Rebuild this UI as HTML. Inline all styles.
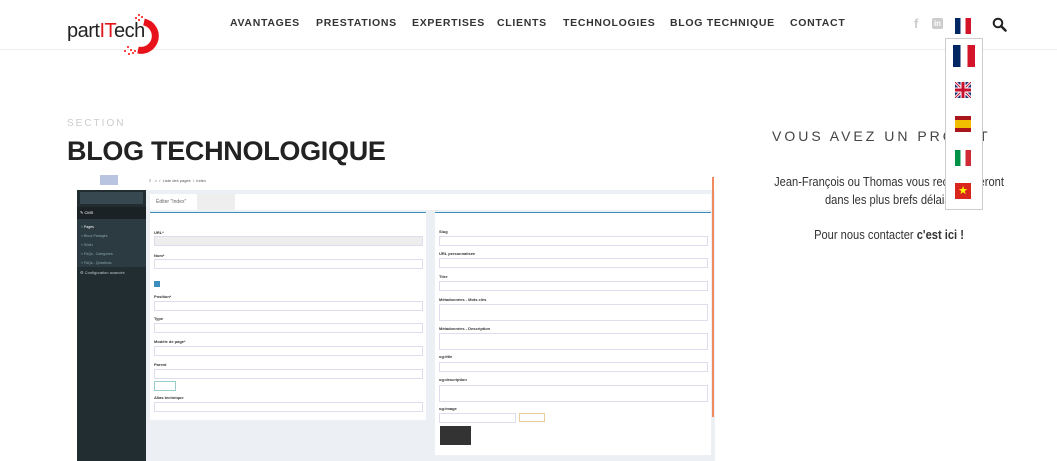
<!DOCTYPE html>
<html><head><meta charset="utf-8"><style>
*{margin:0;padding:0;box-sizing:border-box}
body{width:1057px;height:461px;overflow:hidden;background:#fff;font-family:"Liberation Sans",sans-serif;position:relative;color:#333}
.a{position:absolute}
.nav{top:17px;font-size:10.5px;font-weight:bold;letter-spacing:0.7px;color:#333;white-space:nowrap}
.lbl{position:absolute;font-size:4px;font-weight:bold;color:#333}
.inp{position:absolute;background:#fff;border:1px solid #dde;height:10px;font-size:4px;color:#888;padding:2px 4px}
</style></head><body>
<div class="a" style="left:0;top:49px;width:1057px;height:1px;background:#eee"></div>
<!-- logo -->
<svg class="a" style="left:116px;top:13px" width="46" height="44" viewBox="0 0 46 44"><path d="M28 9 A14 14 0 0 1 22 37" fill="none" stroke="#e8131a" stroke-width="7"/><g fill="#f44">
<rect x="22" y="1" width="2" height="2"/><rect x="25" y="3" width="2" height="2"/><rect x="19" y="4" width="2" height="2"/><rect x="22" y="6" width="2" height="2"/><rect x="14" y="36" width="2" height="2"/><rect x="11" y="33" width="2" height="2"/><rect x="16" y="39" width="2" height="2"/><rect x="8" y="37" width="2" height="2"/><rect x="12" y="40" width="2" height="2"/><rect x="18" y="37" width="2" height="2"/></g></svg>
<div class="a" style="left:67px;top:20px;font-size:20px;color:#222;letter-spacing:-0.5px">part<span style="color:#e0161b">IT</span>ech</div>
<div class="a nav" style="left:230px">AVANTAGES</div>
<div class="a nav" style="left:316px">PRESTATIONS</div>
<div class="a nav" style="left:412px">EXPERTISES</div>
<div class="a nav" style="left:497px">CLIENTS</div>
<div class="a nav" style="left:563px">TECHNOLOGIES</div>
<div class="a nav" style="left:670px">BLOG TECHNIQUE</div>
<div class="a nav" style="left:790px">CONTACT</div>
<div class="a" style="left:914px;top:16px;font-size:13px;color:#ccc;font-weight:bold">f</div>
<div class="a" style="left:932px;top:18px;width:11px;height:11px;background:#ccc;border-radius:2px;color:#fff;font-size:8px;font-weight:bold;text-align:center;line-height:11px">in</div>
<div class="a" style="left:955px;top:18px;width:16px;height:16px;background:linear-gradient(90deg,#002664 33%,#fff 33%,#fff 66%,#d4142b 66%)"></div>
<svg class="a" style="left:992px;top:17px" width="15" height="15" viewBox="0 0 15 15"><circle cx="6" cy="6" r="4.3" fill="none" stroke="#222" stroke-width="2"/><path d="M9 9 L13.5 13.5" stroke="#222" stroke-width="2.5" stroke-linecap="round"/></svg>
<!-- section -->
<div class="a" style="left:67px;top:118px;font-size:10px;letter-spacing:2px;color:#ccc">SECTION</div>
<div class="a" style="left:67px;top:136px;font-size:27px;font-weight:bold;color:#222;letter-spacing:-0.3px">BLOG TECHNOLOGIQUE</div>
<!-- right -->
<div class="a" style="left:772px;top:128px;font-size:14px;letter-spacing:3px;color:#444;white-space:nowrap">VOUS AVEZ UN PROJET</div>
<div class="a" style="left:740px;top:174px;width:298px;text-align:center;font-size:12.5px;line-height:17.5px;color:#333;white-space:nowrap;transform:scaleX(0.89)">Jean-François ou Thomas vous recontacteront<br>dans les plus brefs délais.<br><br>Pour nous contacter <b>c'est ici !</b></div>
<!-- dropdown -->
<div class="a" style="left:945px;top:38px;width:38px;height:172px;background:#fff;border:1px solid #ccc">
<div class="a" style="left:7px;top:6px;width:22px;height:22px;background:linear-gradient(90deg,#002664 33%,#fff 33%,#fff 66%,#d4142b 66%)"></div>
<svg class="a" style="left:9px;top:43px" width="16" height="16" viewBox="0 0 16 16"><rect width="16" height="16" fill="#1d2e73"/><path d="M0 0L16 16M16 0L0 16" stroke="#fff" stroke-width="3"/><path d="M0 0L16 16M16 0L0 16" stroke="#c8102e" stroke-width="1"/><path d="M8 0V16M0 8H16" stroke="#fff" stroke-width="5"/><path d="M8 0V16M0 8H16" stroke="#c8102e" stroke-width="3"/></svg>
<div class="a" style="left:9px;top:77px;width:16px;height:16px;background:linear-gradient(#aa151b 25%,#f1bf00 25%,#f1bf00 75%,#aa151b 75%)"></div>
<div class="a" style="left:9px;top:111px;width:16px;height:16px;background:linear-gradient(90deg,#009246 33%,#fff 33%,#fff 66%,#ce2b37 66%)"></div>
<div class="a" style="left:9px;top:144px;width:16px;height:16px;background:#da251d;color:#ff0;font-size:11px;text-align:center;line-height:16px">★</div>
</div>
<!-- screenshot -->
<div class="a" style="left:77px;top:173px;width:638px;height:288px;background:#ecf0f5;overflow:hidden">
 <div class="a" style="left:0;top:0;width:638px;height:17px;background:#fff"></div>
 <div class="a" style="left:23px;top:2px;width:18px;height:10px;background:#b8c4e0"></div>
 <div class="a" style="left:0;top:17px;width:69px;height:271px;background:#222d32"></div>
 <div class="a" style="left:3px;top:19px;width:63px;height:12px;background:#374850"></div>
 <div class="a" style="left:0;top:34px;width:69px;height:12px;background:#1a2226"></div>
 <div class="a" style="left:3px;top:37px;font-size:4px;color:#fff">✎ CMS</div>
 <div class="a" style="left:0;top:46px;width:69px;height:48px;background:#2c3b41;font-size:3.5px;color:#8aa4af;padding:4px 4px;line-height:9px">» <span style="color:#fff">Pages</span><br>» Blocs Partagés<br>» Slider<br>» FAQs - Catégories<br>» FAQs - Questions</div>
 <div class="a" style="left:3px;top:97px;font-size:4px;color:#b8c7ce">⚙ Configuration avancée</div>
 <div class="a" style="left:72px;top:5px;font-size:4px;color:#555">≡ &nbsp; ⌂ &nbsp;/&nbsp; Liste des pages &nbsp;/&nbsp; Index</div>
 <div class="a" style="left:73px;top:21px;width:561px;height:16px;background:#fff"></div>
 <div class="a" style="left:120px;top:21px;width:38px;height:16px;background:#eee"></div>
 <div class="a" style="left:79px;top:26px;font-size:5px;color:#666">Éditer "Index"</div>
 <div class="a" style="left:73px;top:39px;width:276px;height:208px;background:#fff;border-top:1px solid #3c8dbc"></div>
 <div class="a" style="left:358px;top:39px;width:276px;height:243px;background:#fff;border-top:1px solid #3c8dbc"></div>
 <div class="a" style="left:635px;top:4px;width:2px;height:240px;background:#f08a60"></div>
 <div class="lbl" style="left:77px;top:57px">URL*</div>
 <div class="inp" style="left:77px;top:63px;width:269px;background:#eee"></div>
 <div class="lbl" style="left:77px;top:80px">Nom*</div><div class="inp" style="left:77px;top:86px;width:269px"></div>
 <div class="a" style="left:77px;top:108px;width:6px;height:6px;background:#3c8dbc"></div>
 <div class="lbl" style="left:77px;top:121px">Position*</div><div class="inp" style="left:77px;top:128px;width:269px"></div>
 <div class="lbl" style="left:77px;top:143px">Type</div><div class="inp" style="left:77px;top:150px;width:269px"></div>
 <div class="lbl" style="left:77px;top:166px">Modèle de page*</div><div class="inp" style="left:77px;top:173px;width:269px"></div>
 <div class="lbl" style="left:77px;top:189px">Parent</div><div class="inp" style="left:77px;top:196px;width:269px"></div>
 <div class="inp" style="left:77px;top:208px;width:22px;border-color:#9cc"></div>
 <div class="lbl" style="left:77px;top:222px">Alias technique</div><div class="inp" style="left:77px;top:229px;width:269px"></div>
 <div class="lbl" style="left:362px;top:56px">Slug</div><div class="inp" style="left:362px;top:63px;width:269px"></div>
 <div class="lbl" style="left:362px;top:78px">URL personnalisée</div><div class="inp" style="left:362px;top:85px;width:269px"></div>
 <div class="lbl" style="left:362px;top:101px">Titre</div><div class="inp" style="left:362px;top:108px;width:269px"></div>
 <div class="lbl" style="left:362px;top:124px">Métadonnées - Mots clés</div><div class="inp" style="left:362px;top:131px;width:269px;height:17px"></div>
 <div class="lbl" style="left:362px;top:153px">Métadonnées - Description</div><div class="inp" style="left:362px;top:160px;width:269px;height:17px"></div>
 <div class="lbl" style="left:362px;top:181px">og:title</div><div class="inp" style="left:362px;top:189px;width:269px"></div>
 <div class="lbl" style="left:362px;top:204px">og:description</div><div class="inp" style="left:362px;top:212px;width:269px;height:17px"></div>
 <div class="lbl" style="left:362px;top:233px">og:image</div><div class="inp" style="left:362px;top:240px;width:77px"></div>
 <div class="a" style="left:442px;top:240px;width:26px;height:9px;border:1px solid #ec9;background:#fff"></div>
 <div class="a" style="left:363px;top:253px;width:31px;height:19px;background:#333"></div>
</div>
</body></html>
